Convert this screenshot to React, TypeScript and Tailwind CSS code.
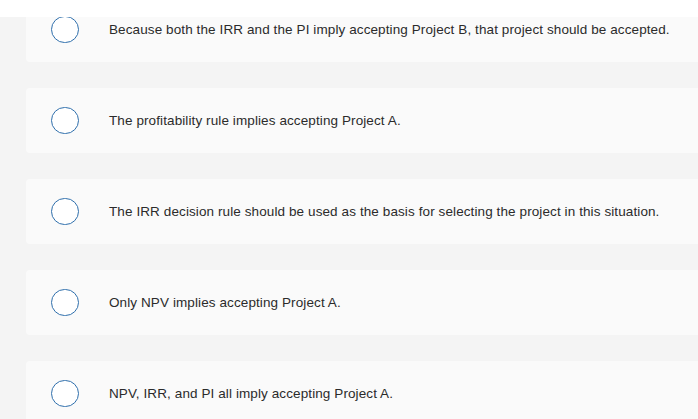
import React from "react";

const options = [
  "Because both the IRR and the PI imply accepting Project B, that project should be accepted.",
  "The profitability rule implies accepting Project A.",
  "The IRR decision rule should be used as the basis for selecting the project in this situation.",
  "Only NPV implies accepting Project A.",
  "NPV, IRR, and PI all imply accepting Project A.",
];

export default function App() {
  return (
    <div
      className="relative w-[698px] h-[419px] overflow-hidden bg-[#f4f4f4]"
      style={{ fontFamily: '"Liberation Sans", Arial, sans-serif' }}
    >
      <div className="absolute left-0 top-0 w-full h-[17px] bg-white z-10" />
      <div className="flex flex-col gap-[26px] pl-[26px] mt-[-3px]">
        {options.map((t) => (
          <div
            key={t}
            className="flex items-center h-[65px] bg-[#fafafa] rounded-l-[4px]"
          >
            <div className="ml-[25px] w-[28px] h-[27px] rounded-full border-[1.5px] border-[#2f6fac] bg-white shrink-0" />
            <div className="ml-[30px] mt-[2px] text-[13.5px] text-[#2b2b2b] tracking-[0.1px]">{t}</div>
          </div>
        ))}
      </div>
    </div>
  );
}
